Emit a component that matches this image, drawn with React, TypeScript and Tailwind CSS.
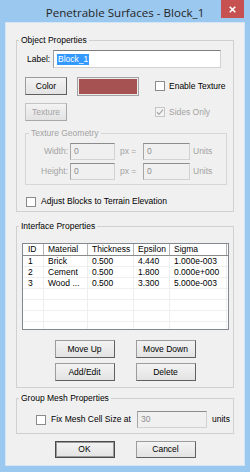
import React from "react";

const font = "font-['Liberation_Sans',Arial,sans-serif] text-[8.5px] leading-[11px]";

type BtnProps = {
  label: string;
  w: string;
  h?: string;
  disabled?: boolean;
  primary?: boolean;
};

function Btn({ label, w, h = "h-[18px]", disabled = false, primary = false }: BtnProps) {
  const edge = primary
    ? "border-[#4a4a4a] shadow-[inset_0_0_0_1px_#9a9a9a]"
    : disabled
      ? "border-[#c4c4c4] border-r-[#a8a8a8] border-b-[#a8a8a8]"
      : "border-[#9c9c9c] border-r-[#606060] border-b-[#606060]";
  return (
    <button
      type="button"
      className={`flex ${w} ${h} shrink-0 items-center justify-center border ${edge} bg-gradient-to-b from-[#f3f3f3] to-[#e3e3e3] ${disabled ? "text-[#a3a3a3]" : "text-black"}`}
    >
      {label}
    </button>
  );
}

function Check({ checked = false, disabled = false }: { checked?: boolean; disabled?: boolean }) {
  return (
    <span
      className={`flex h-[10px] w-[10px] shrink-0 items-center justify-center border ${disabled ? "border-[#c6c6c6] bg-[#f3f3f3]" : "border-[#8a8a8a] bg-white"}`}
    >
      {checked && (
        <svg width="8" height="8" viewBox="0 0 8 8">
          <path d="M1 4.2 L3 6.3 L7 1.6" fill="none" stroke={disabled ? "#a9a9a9" : "#222"} strokeWidth="1.3" />
        </svg>
      )}
    </span>
  );
}

function Field({ value, w, disabled = true }: { value: string; w: string; disabled?: boolean }) {
  return (
    <div
      className={`flex h-[17px] ${w} shrink-0 items-center border border-[#d2d2d2] border-t-[#8c8c8c] border-l-[#a6a6a6] pl-[3px] ${disabled ? "bg-[#f0f0f0] text-[#8d8d8d]" : "bg-white text-black"}`}
    >
      {value}
    </div>
  );
}

const cols = "grid grid-cols-[21px_44px_46px_36px_57px]";

const rows = [
  ["1", "Brick", "0.500", "4.440", "1.000e-003"],
  ["2", "Cement", "0.500", "1.800", "0.000e+000"],
  ["3", "Wood ...", "0.500", "3.300", "5.000e-003"],
  ["", "", "", "", ""],
  ["", "", "", "", ""],
  ["", "", "", "", ""],
  ["", "", "", "", ""],
];

function List() {
  const head = ["ID", "Material", "Thickness", "Epsilon", "Sigma"];
  return (
    <div className="ml-[5px] flex h-[87px] w-[207px] flex-col overflow-hidden border border-[#828790] bg-white">
      <div className={`${cols} h-[15px] border-b border-[#8a8a8a]`}>
        {head.map((h, i) => (
          <div key={h} className={`flex items-center border-r border-[#b4b4b4] ${i === 0 ? "pl-[5px]" : "pl-[4px]"}`}>
            {h}
          </div>
        ))}
      </div>
      {rows.map((r, ri) => (
        <div key={ri} className={`${cols} h-[11px] shrink-0 border-b border-[#efefef]`}>
          {r.map((c, i) => (
            <div key={i} className={`flex items-center border-r border-[#efefef] ${i === 0 ? "pl-[5px]" : "pl-[4px]"}`}>
              {c}
            </div>
          ))}
        </div>
      ))}
    </div>
  );
}

export default function App() {
  return (
    <div className={`flex h-[472px] w-[250px] flex-col bg-[#9bc8ef] ${font} text-black`}>
      {/* title bar */}
      <div className="relative flex h-[22px] shrink-0 justify-center pt-[3px]">
        <span className="font-['Open_Sans',sans-serif] text-[11.6px] leading-[20px] text-[#262626]">
          Penetrable Surfaces - Block_1
        </span>
        <div className="absolute top-0 right-[6px] flex h-[18px] w-[23px] items-center justify-center bg-[#c75050]">
          <svg width="7" height="7" viewBox="0 0 7 7">
            <path d="M0.7 0.7 L6.3 6.3 M6.3 0.7 L0.7 6.3" stroke="#fff" strokeWidth="1.6" />
          </svg>
        </div>
      </div>

      {/* client */}
      <div className="mx-[5px] flex h-[444px] shrink-0 flex-col border border-[#d3e6f8] bg-[#f0f0f0]">
        {/* Object Properties */}
        <fieldset className="mx-[10px] mt-[12px] border border-[#d0d0d0] pb-[4px]">
          <legend className="ml-[2px] px-[2px] leading-[11px]">Object Properties</legend>
          <div className="mt-[4px] flex h-[18px] items-center pl-[10px]">
            <span className="w-[26px]">Label:</span>
            <div className="flex h-[18px] w-[168px] items-center border border-[#d2d2d2] border-t-[#7f7f7f] border-l-[#a2a2a2] bg-white pl-[3px]">
              <span className="bg-[#3399ff] px-[1px] text-white">Block_1</span>
            </div>
          </div>

          <div className="mt-[9px] flex h-[18px] items-center pl-[8px]">
            <Btn label="Color" w="w-[42px]" />
            <div className="ml-[10px] h-[19px] w-[62px] border border-[#a3a3a3] bg-[#ececec] p-[1px]">
              <div className="h-full w-full bg-[#a65252]" />
            </div>
            <span className="ml-[16px]">
              <Check />
            </span>
            <span className="ml-[4px]">Enable Texture</span>
          </div>

          <div className="mt-[8px] flex h-[18px] items-center pl-[8px]">
            <Btn label="Texture" w="w-[42px]" disabled />
            <span className="ml-[88px]">
              <Check checked disabled />
            </span>
            <span className="ml-[4px] text-[#a3a3a3]">Sides Only</span>
          </div>

          {/* Texture Geometry */}
          <fieldset className="mt-[7px] ml-[8px] w-[202px] border border-[#d6d6d6] pb-[4px] text-[#a3a3a3]">
            <legend className="ml-[3px] px-[2px] leading-[11px]">Texture Geometry</legend>
            <div className="mt-[4px] flex items-center">
              <span className="w-[42px] text-right">Width:</span>
              <span className="ml-[2px]">
                <Field value="0" w="w-[45px]" />
              </span>
              <span className="ml-[5px] w-[23px]">px =</span>
              <Field value="0" w="w-[47px]" />
              <span className="ml-[3px]">Units</span>
            </div>
            <div className="mt-[3px] flex items-center">
              <span className="w-[42px] text-right">Height:</span>
              <span className="ml-[2px]">
                <Field value="0" w="w-[45px]" />
              </span>
              <span className="ml-[5px] w-[23px]">px =</span>
              <Field value="0" w="w-[47px]" />
              <span className="ml-[3px]">Units</span>
            </div>
          </fieldset>

          <div className="mt-[11px] flex h-[11px] items-center pl-[9px]">
            <Check />
            <span className="ml-[5px]">Adjust Blocks to Terrain Elevation</span>
          </div>
        </fieldset>

        {/* Interface Properties */}
        <fieldset className="mx-[10px] mt-[9px] border border-[#d0d0d0] pb-[6px]">
          <legend className="ml-[2px] px-[2px] leading-[11px]">Interface Properties</legend>
          <div className="mt-[11px]">
            <List />
          </div>
          <div className="mt-[10px] flex justify-center gap-[21px]">
            <Btn label="Move Up" w="w-[60px]" />
            <Btn label="Move Down" w="w-[60px]" />
          </div>
          <div className="mt-[5px] flex justify-center gap-[21px]">
            <Btn label="Add/Edit" w="w-[60px]" />
            <Btn label="Delete" w="w-[60px]" />
          </div>
        </fieldset>

        {/* Group Mesh Properties */}
        <fieldset className="mx-[10px] mt-[5px] border border-[#d0d0d0] pb-[5px]">
          <legend className="ml-[2px] px-[2px] leading-[11px]">Group Mesh Properties</legend>
          <div className="mt-[7px] flex items-center pl-[19px]">
            <Check />
            <span className="ml-[5px] w-[86px]">Fix Mesh Cell Size at</span>
            <Field value="30" w="w-[70px]" />
            <span className="ml-[5px]">units</span>
          </div>
        </fieldset>

        <div className="mt-[7px] flex justify-center gap-[21px]">
          <Btn label="OK" w="w-[60px]" h="h-[17px]" primary />
          <Btn label="Cancel" w="w-[60px]" h="h-[17px]" />
        </div>
      </div>
    </div>
  );
}
